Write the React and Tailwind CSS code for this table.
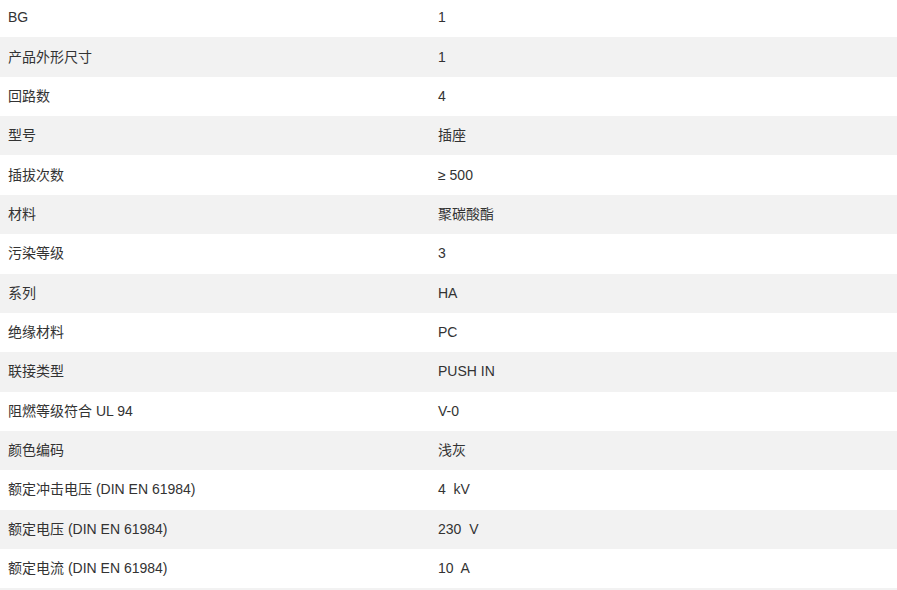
const rows = [
  ['BG', '1'],
  ['产品外形尺寸', '1'],
  ['回路数', '4'],
  ['型号', '插座'],
  ['插拔次数', '≥ 500'],
  ['材料', '聚碳酸酯'],
  ['污染等级', '3'],
  ['系列', 'HA'],
  ['绝缘材料', 'PC'],
  ['联接类型', 'PUSH IN'],
  ['阻燃等级符合 UL 94', 'V-0'],
  ['颜色编码', '浅灰'],
  ['额定冲击电压 (DIN EN 61984)', '4\u00a0 kV'],
  ['额定电压 (DIN EN 61984)', '230\u00a0 V'],
  ['额定电流 (DIN EN 61984)', '10\u00a0 A'],
  ['', ''],
];

export default function App() {
  return (
    <div
      className="w-[897px] h-[590px] overflow-hidden bg-white text-[14px] text-[#333]"
      style={{ fontFamily: '"Liberation Sans", "Noto Sans CJK SC", sans-serif' }}
    >
      <div className="-mt-[2px]">
        {rows.map(([label, value], i) => (
          <div
            key={i}
            className={`flex items-center h-[39.36px] ${i % 2 === 1 ? 'bg-[#f2f2f2]' : 'bg-white'}`}
          >
            <div className="w-[430px] pl-2">{label}</div>
            <div className="flex-1 pl-2">{value}</div>
          </div>
        ))}
      </div>
    </div>
  );
}
